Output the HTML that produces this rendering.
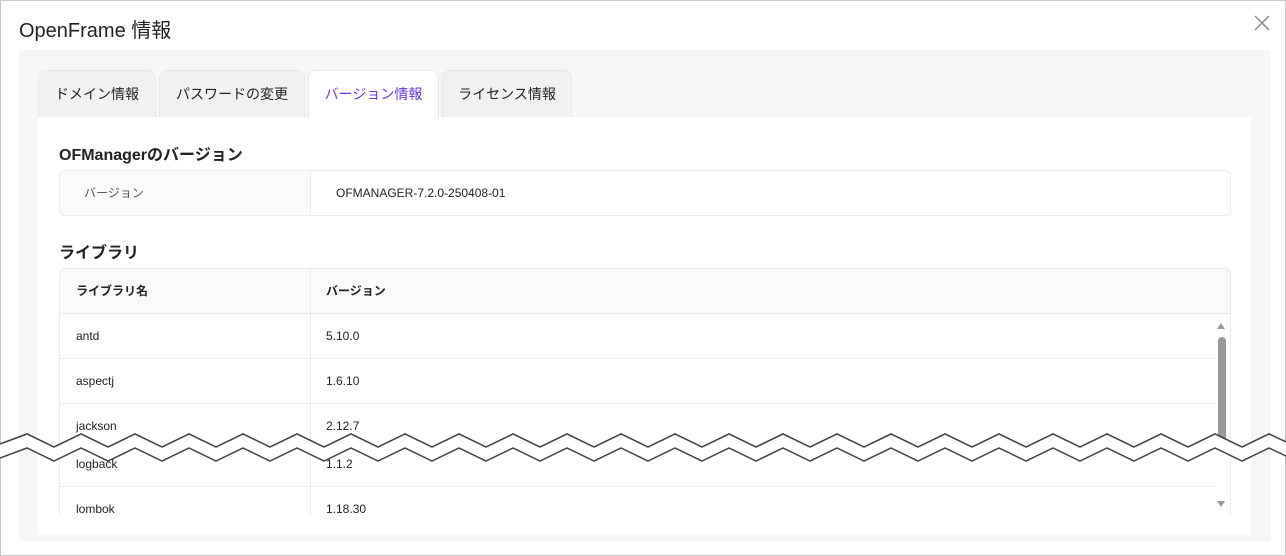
<!DOCTYPE html>
<html><head><meta charset="utf-8"><style>
*{box-sizing:border-box;margin:0;padding:0}
body{width:1286px;height:556px;overflow:hidden;background:#fff;font-family:"Liberation Sans","Noto Sans CJK JP",sans-serif;color:#222;position:relative}
.frame{position:absolute;left:0;top:0;width:1286px;height:556px;border:1px solid #c8c8c8}
.title{position:absolute;left:19px;top:14px;font-size:20px;color:#222}
.close{position:absolute;left:1253px;top:14px}
.panel{position:absolute;left:19px;top:50px;width:1252px;height:491px;background:#f5f6f8}
.tab{position:absolute;top:70px;height:48px;background:#f0f1f3;border:1px solid #e8e8e8;border-bottom:none;border-radius:8px 8px 0 0;font-size:14px;line-height:47px;text-align:center;color:#222}
.tab.act{background:#fff;color:#6a35e8}
.content{position:absolute;left:38px;top:117px;width:1213px;height:418px;background:#fff}
h3{position:absolute;left:59px;font-size:16px;font-weight:bold}
.vt{position:absolute;left:59px;top:170px;width:1172px;height:46px;border:1px solid #ebebeb;border-radius:6px;overflow:hidden;font-size:12px}
.vt .l{position:absolute;left:0;top:0;width:251px;height:100%;background:#fafafa;border-right:1px solid #ebebeb;padding-left:24px;line-height:44px;color:#555}
.vt .r{position:absolute;left:276px;top:0;line-height:44px;color:#222}
.lt{position:absolute;left:59px;top:268px;width:1172px;height:247px;border:1px solid #ebebeb;border-bottom:none;border-radius:6px 6px 0 0;overflow:hidden;font-size:12px}
.row{position:absolute;left:0;width:1156px;height:45px;border-bottom:1px solid #ebebeb}
.row div{position:absolute;top:0;line-height:44px}
.row .a{left:16px}.row .b{left:266px}
.row:before{content:"";position:absolute;left:250px;top:0;width:1px;height:45px;background:#ebebeb}
.hd{background:#fafafa;font-weight:bold;width:1172px}
</style></head><body>
<div class="frame"></div>
<div class="title">OpenFrame 情報</div>
<svg class="close" width="18" height="18" viewBox="0 0 18 18"><path d="M2 2L16 16M16 2L2 16" stroke="#888" stroke-width="1.5"/></svg>
<div class="panel"></div>
<div class="tab" style="left:38px;width:118px">ドメイン情報</div>
<div class="tab" style="left:159px;width:146px">パスワードの変更</div>
<div class="tab" style="left:442px;width:130px">ライセンス情報</div>
<div class="content"></div>
<div class="tab act" style="left:308px;width:131px;height:49px">バージョン情報</div>
<h3 style="top:141px">OFManagerのバージョン</h3>
<div class="vt"><div class="l">バージョン</div><div class="r">OFMANAGER-7.2.0-250408-01</div></div>
<h3 style="top:239px">ライブラリ</h3>
<div class="lt">
<div class="row hd" style="top:0"><div class="a">ライブラリ名</div><div class="b">バージョン</div></div>
<div class="row" style="top:45px"><div class="a">antd</div><div class="b">5.10.0</div></div>
<div class="row" style="top:90px"><div class="a">aspectj</div><div class="b">1.6.10</div></div>
<div class="row" style="top:135px"><div class="a">jackson</div><div class="b">2.12.7</div></div>
<div class="row" style="top:173px"><div class="a">logback</div><div class="b">1.1.2</div></div>
<div class="row" style="top:218px"><div class="a">lombok</div><div class="b">1.18.30</div></div>
</div>
<svg style="position:absolute;left:1214px;top:320px" width="14" height="190"><path d="M3 9L7 3L11 9Z" fill="#999"/><rect x="4" y="17" width="8" height="110" rx="4" fill="#999"/><path d="M3 181L7 187L11 181Z" fill="#999"/></svg>
<svg style="position:absolute;left:0;top:430px" width="1286" height="38" viewBox="0 0 1286 38">
<path id="z" d="M0 14 L27 4 L54 17 L81 4 L108 17 L135 4 L162 17 L189 4 L216 17 L243 4 L270 17 L297 4 L324 17 L351 4 L378 17 L405 4 L432 17 L459 4 L486 17 L513 4 L540 17 L567 4 L594 17 L621 4 L648 17 L675 4 L702 17 L729 4 L756 17 L783 4 L810 17 L837 4 L864 17 L891 4 L918 17 L945 4 L972 17 L999 4 L1026 17 L1053 4 L1080 17 L1107 4 L1134 17 L1161 4 L1188 17 L1215 4 L1242 17 L1269 4 L1286 12" fill="none" stroke="#444" stroke-width="1.5"/>
<path d="M0 14 L27 4 L54 17 L81 4 L108 17 L135 4 L162 17 L189 4 L216 17 L243 4 L270 17 L297 4 L324 17 L351 4 L378 17 L405 4 L432 17 L459 4 L486 17 L513 4 L540 17 L567 4 L594 17 L621 4 L648 17 L675 4 L702 17 L729 4 L756 17 L783 4 L810 17 L837 4 L864 17 L891 4 L918 17 L945 4 L972 17 L999 4 L1026 17 L1053 4 L1080 17 L1107 4 L1134 17 L1161 4 L1188 17 L1215 4 L1242 17 L1269 4 L1286 12 L1286 26 L1269 18 L1242 31 L1215 18 L1188 31 L1161 18 L1134 31 L1107 18 L1080 31 L1053 18 L1026 31 L999 18 L972 31 L945 18 L918 31 L891 18 L864 31 L837 18 L810 31 L783 18 L756 31 L729 18 L702 31 L675 18 L648 31 L621 18 L594 31 L567 18 L540 31 L513 18 L486 31 L459 18 L432 31 L405 18 L378 31 L351 18 L324 31 L297 18 L270 31 L243 18 L216 31 L189 18 L162 31 L135 18 L108 31 L81 18 L54 31 L27 18 L0 28Z" fill="#fff"/>
<use href="#z"/>
<use href="#z" transform="translate(0,14)"/>
</svg>
</body></html>
